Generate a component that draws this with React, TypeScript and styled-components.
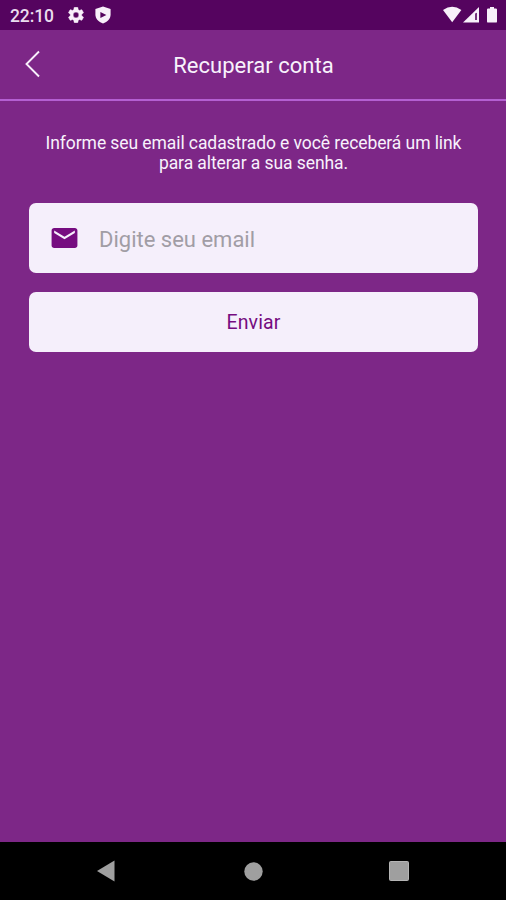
import React from "react";
import styled, { createGlobalStyle } from "styled-components";

const GlobalStyle = createGlobalStyle`
  * { box-sizing: border-box; }
  body { margin: 0; background: #7d2787; }
`;

const Screen = styled.div`
  display: flex;
  flex-direction: column;
  width: 506px;
  height: 900px;
  overflow: hidden;
  background: #7d2787;
  color: #f8f2fc;
  font-family: Roboto, sans-serif;
`;

const StatusBar = styled.div`
  display: flex;
  align-items: center;
  flex: none;
  height: 30px;
  padding: 0 8px 0 10px;
  background: #55045f;
  color: #f8f0fa;
`;

const Clock = styled.span`
  width: 58px;
  font-size: 17.5px;
  font-weight: 500;
  line-height: 30px;
  padding-top: 2px;
  letter-spacing: -0.1px;
  color: #eadcee;
`;

const StatusIcons = styled.div<{ $end?: boolean }>`
  display: flex;
  align-items: center;
  gap: ${(p) => (p.$end ? 0 : 10)}px;
  margin-left: ${(p) => (p.$end ? "auto" : "0")};
`;

const Icon = styled.svg`
  display: block;
  flex: none;
`;

const Header = styled.header`
  display: grid;
  grid-template-columns: 64px 1fr 64px;
  align-items: center;
  flex: none;
  height: 71px;
  padding-bottom: 1px;
  border-bottom: 2px solid #b45fd2;
`;

const BackButton = styled.button`
  border: 0;
  padding: 0 0 0 25px;
  background: none;
  color: #f8effb;
`;

const Title = styled.h1`
  margin: 0;
  padding: 3px 0 0 1px;
  text-align: center;
  font-size: 22px;
  font-weight: 400;
  line-height: 28px;
  letter-spacing: 0.02px;
`;

const Content = styled.main`
  display: flex;
  flex-direction: column;
  flex: 1;
  padding: 32px 28px 0 29px;
`;

const Message = styled.p`
  margin: 0 0 30px;
  text-align: center;
  font-size: 17.5px;
  line-height: 20px;
  letter-spacing: -0.08px;
`;

const Field = styled.label`
  display: flex;
  align-items: center;
  height: 70px;
  padding-left: 20px;
  border-radius: 7px;
  background: #f5effb;
  color: #760c80;
`;

const EmailInput = styled.input`
  flex: 1;
  min-width: 0;
  margin-left: 19px;
  padding: 3px 0 0;
  border: 0;
  outline: 0;
  background: none;
  font: 400 22px/28px Roboto, sans-serif;
  &::placeholder { color: #a19da5; opacity: 1; }
`;

const SubmitButton = styled.button`
  height: 60px;
  margin-top: 19px;
  padding: 2px 0 0;
  border: 0;
  border-radius: 7px;
  background: #f5effb;
  color: #760c80;
  font: 400 19.5px/24px Roboto, sans-serif;
  letter-spacing: 0.1px;
`;

const NavigationBar = styled.nav`
  display: grid;
  grid-template-columns: 180px 147px 1fr;
  align-items: center;
  flex: none;
  height: 58px;
  background: #000;
  color: #9f9f9f;
`;

const NavItem = styled.div<{ $left: number }>`
  padding-left: ${(p) => p.$left}px;
`;

export default function App() {
  return (
    <>
      <GlobalStyle />
      <Screen>
        <StatusBar>
          <Clock>22:10</Clock>
          <StatusIcons>
            <Icon width="16" height="16" viewBox="2 2 20 20" fill="currentColor" stroke="currentColor" strokeWidth=".6">
              <path d="M19.14 12.94a7 7 0 0 0 .05-.94 7 7 0 0 0-.07-.94l2.03-1.58a.5.5 0 0 0 .12-.61l-1.92-3.32a.5.5 0 0 0-.59-.22l-2.39.96a7 7 0 0 0-1.62-.94l-.36-2.54A.5.5 0 0 0 13.9 2.4h-3.84a.5.5 0 0 0-.47.41l-.36 2.54a7.3 7.3 0 0 0-1.62.94l-2.39-.96a.5.5 0 0 0-.59.22L2.74 8.87a.5.5 0 0 0 .12.61l2.03 1.58a6 6 0 0 0 0 1.88l-2.03 1.58a.5.5 0 0 0-.12.61l1.92 3.32c.12.22.37.29.59.22l2.39-.96c.5.38 1.03.7 1.62.94l.36 2.54c.05.24.24.41.48.41h3.84c.24 0 .44-.17.47-.41l.36-2.54a7 7 0 0 0 1.62-.94l2.39.96c.22.08.47 0 .59-.22l1.92-3.32a.5.5 0 0 0-.12-.61zM12 15.6a3.6 3.6 0 1 1 0-7.2 3.6 3.6 0 0 1 0 7.2z" />
            </Icon>
            <Icon width="18" height="18" viewBox="0 0 18 18">
              <path d="M9 .4 16.6 3v5.5c0 4.2-3 7.2-7.6 9-4.6-1.8-7.6-4.8-7.6-9V3z" fill="currentColor" />
              <path d="m6.4 6 6 3-6 3z" fill="#55045f" />
            </Icon>
          </StatusIcons>
          <StatusIcons $end>
            <Icon width="55" height="18" viewBox="0 0 55 18" fill="currentColor">
              <path d="M0 4.1Q9.2-2.4 18.4 4.1L9.2 16.3z" />
              <path d="M36 1v15.5H20z" />
              <path d="M32.2 7.6v6.4h1.6V6.8z" fill="#55045f" />
              <path d="M47 2.4V1h4v1.4h1.8q1.2 0 1.2 1.2v11.8q0 1.2-1.2 1.2h-7.6q-1.2 0-1.2-1.2V3.6q0-1.2 1.2-1.2z" />
            </Icon>
          </StatusIcons>
        </StatusBar>
        <Header>
          <BackButton aria-label="Voltar">
            <Icon width="16" height="28" viewBox="0 0 16 28" fill="none" stroke="currentColor" strokeWidth="1.9">
              <path d="M14 1.5 1.5 14 14 26.5" />
            </Icon>
          </BackButton>
          <Title>Recuperar conta</Title>
        </Header>
        <Content>
          <Message>
            Informe seu email cadastrado e você receberá um link
            <br />
            para alterar a sua senha.
          </Message>
          <Field>
            <Icon width="31" height="30" viewBox="0 0 24 24" fill="currentColor" preserveAspectRatio="none">
              <path d="M20 4H4c-1.1 0-1.99.9-1.99 2L2 18c0 1.1.9 2 2 2h16c1.1 0 2-.9 2-2V6c0-1.1-.9-2-2-2zm0 4-8 5-8-5V6l8 5 8-5v2z" />
            </Icon>
            <EmailInput type="email" placeholder="Digite seu email" />
          </Field>
          <SubmitButton type="button">Enviar</SubmitButton>
        </Content>
        <NavigationBar>
          <NavItem $left={97}>
            <Icon width="18" height="22" viewBox="0 0 18 22" fill="currentColor">
              <path d="M0 11 17.5.5v21z" />
            </Icon>
          </NavItem>
          <NavItem $left={64}>
            <Icon width="19" height="19" viewBox="0 0 19 19" fill="currentColor">
              <circle cx="9.5" cy="9.5" r="9.2" />
            </Icon>
          </NavItem>
          <NavItem $left={62}>
            <Icon width="20" height="20" viewBox="0 0 20 20">
              <rect x=".5" y=".5" width="19" height="19" rx="1" fill="#9f9f9f" stroke="#b5b5b5" />
            </Icon>
          </NavItem>
        </NavigationBar>
      </Screen>
    </>
  );
}
